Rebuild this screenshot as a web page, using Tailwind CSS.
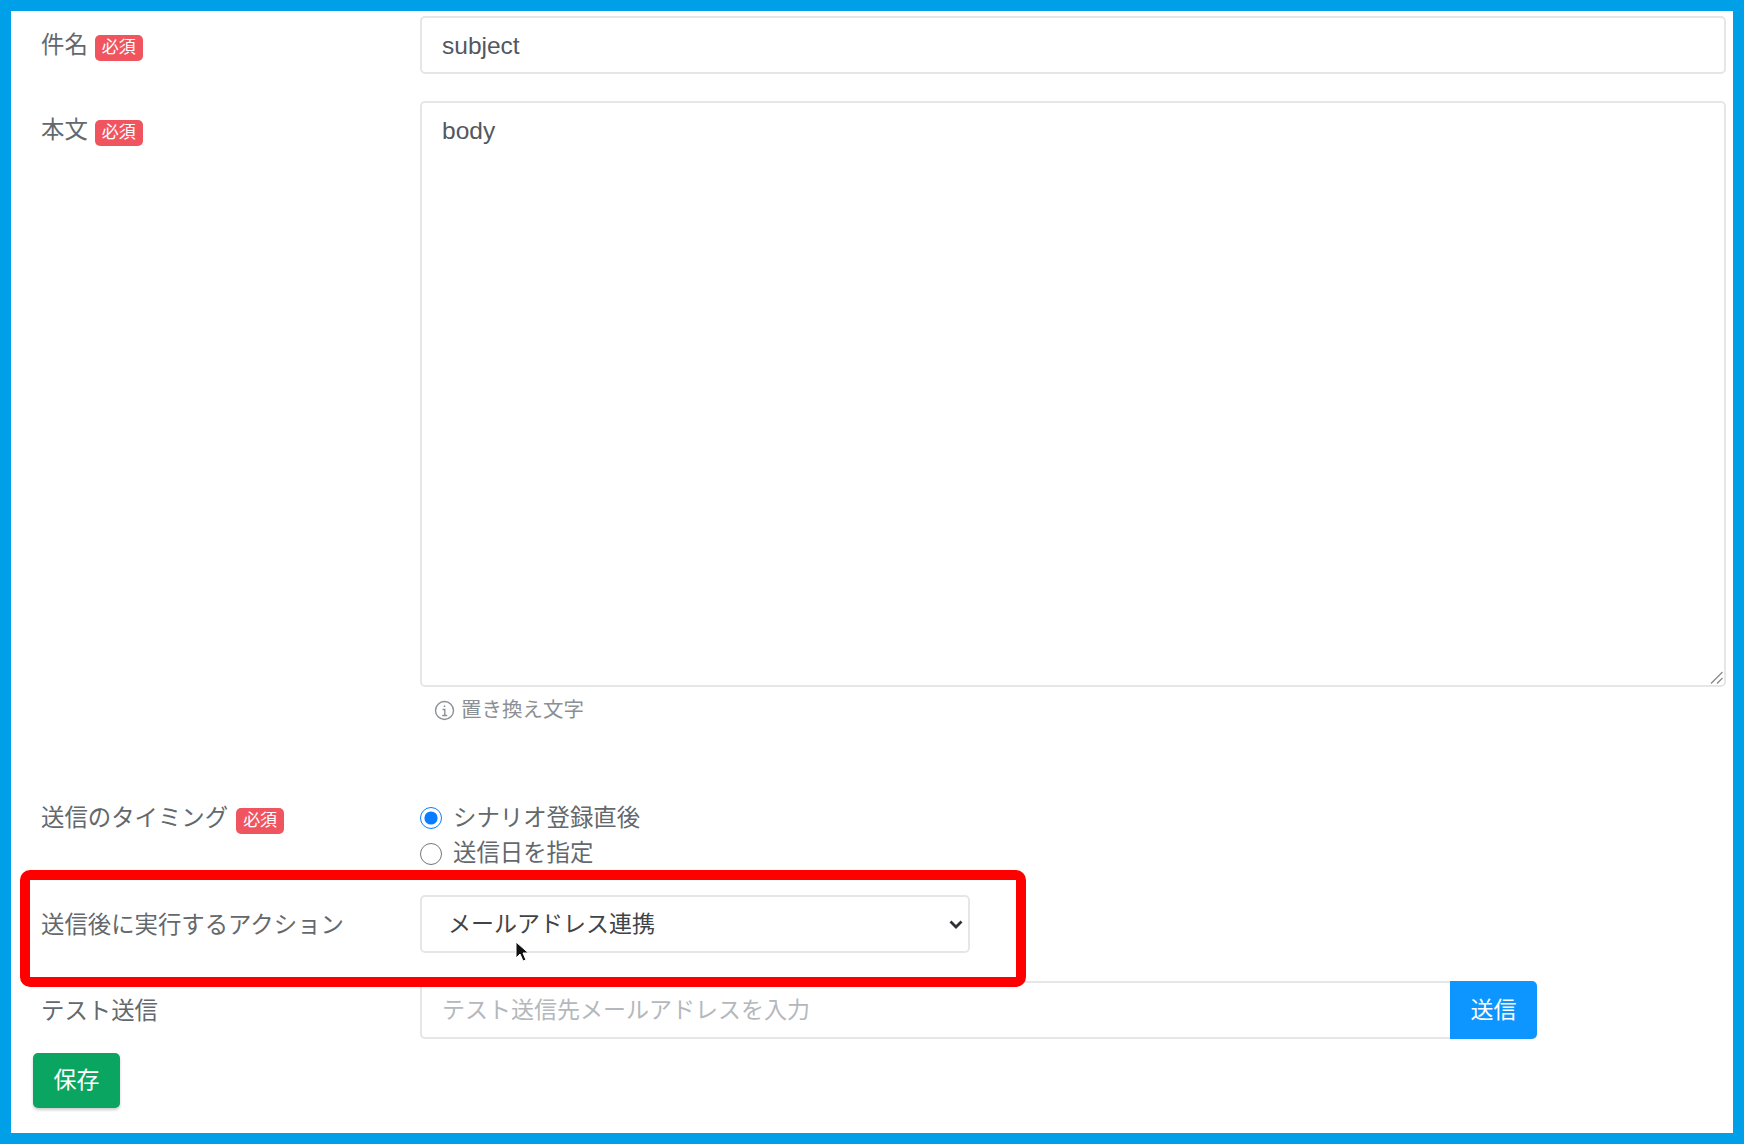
<!DOCTYPE html>
<html lang="ja">
<head>
    <meta charset="UTF-8">
    <meta name="viewport" content="width=device-width, initial-scale=1.0">
    <title>シナリオメール編集</title>
    <script src="https://cdn.jsdelivr.net/npm/@tailwindcss/browser@4"></script>
</head>
<body class="h-[1144px] overflow-hidden bg-white font-['Liberation_Sans','Noto_Sans_CJK_JP',sans-serif] text-[23.400px] text-[#63686d]">
    <div class="relative h-[1144px] border-y-[11px] border-l-[11px] border-r-[11px] border-[#00a0e9] bg-white pl-[30px] pr-[7px] pt-[5px]">
        <form>
            <!-- 件名 -->
            <div class="flex">
                <div class="flex h-[58px] w-[379px] shrink-0 items-center gap-[7px] pt-[2px]">
                    <span>件名</span>
                    <span class="mt-[4px] rounded-[5px] bg-[#f0555f] px-[7px] py-[3px] text-[17px] leading-[20px] text-white">必須</span>
                </div>
                <input type="text" value="subject" class="h-[58px] w-full rounded-[5px] border-2 border-[#e4e6e8] px-[20px] pt-[2px] text-[24.500px] text-[#53585d] outline-none">
            </div>
            <!-- 本文 -->
            <div class="mt-[27px] flex">
                <div class="flex h-[58px] w-[379px] shrink-0 items-center gap-[7px] pt-[2px]">
                    <span>本文</span>
                    <span class="mt-[4px] rounded-[5px] bg-[#f0555f] px-[7px] py-[3px] text-[17px] leading-[20px] text-white">必須</span>
                </div>
                <div class="w-full">
                    <div class="relative">
                        <textarea class="block h-[586px] w-full resize-none rounded-[5px] border-2 border-[#e4e6e8] px-[20px] py-[10px] text-[24.500px] text-[#53585d] outline-none">body</textarea>
                        <svg class="pointer-events-none absolute bottom-[2px] right-[2px] size-[14px]" viewBox="0 0 14 14" fill="none" stroke="#8a8a8a" stroke-width="1.300">
                            <path d="M1 12.500 12.500 1M7 12.500 12.500 7"/>
                        </svg>
                    </div>
                    <div class="mt-[8px] flex h-[30px] items-center gap-[6px] pl-[14px] text-[20.500px] text-[#8b9095]">
                        <svg class="size-[21px]" viewBox="0 0 21 21" fill="none" stroke="#8b9095" stroke-width="1.400">
                            <circle cx="10.500" cy="10.500" r="9"/>
                            <path d="M8.500 9.500h2.300v6M8.200 15.500h5"/>
                            <circle cx="10.500" cy="6.200" r="0.900" fill="#8b9095" stroke="none"/>
                        </svg>
                        <span>置き換え文字</span>
                    </div>
                </div>
            </div>
            <!-- 送信のタイミング -->
            <div class="mt-[75px] flex">
                <div class="flex h-[35px] w-[379px] shrink-0 items-center gap-2 pt-[2px]">
                    <span>送信のタイミング</span>
                    <span class="mt-[4px] rounded-[5px] bg-[#f0555f] px-[7px] py-[3px] text-[17px] leading-[20px] text-white">必須</span>
                </div>
                <div class="flex flex-col gap-px">
                    <label class="flex h-[35px] items-center gap-[11px]">
                        <input type="radio" name="timing" checked class="size-[22px] accent-[#0a7cff]">
                        <span class="pt-[2px]">シナリオ登録直後</span>
                    </label>
                    <label class="flex h-[35px] items-center gap-[11px]">
                        <input type="radio" name="timing" class="size-[22px]">
                        <span>送信日を指定</span>
                    </label>
                </div>
            </div>
            <!-- 送信後に実行するアクション -->
            <div class="mt-[24px] flex items-center">
                <div class="w-[379px] shrink-0 pt-[3px]">送信後に実行するアクション</div>
                <div class="relative w-[550px]">
                    <select class="block h-[58px] w-full appearance-none rounded-[5px] border-2 border-[#e4e6e8] bg-white px-[26px] text-[23px] text-[#3f4448] outline-none">
                        <option>メールアドレス連携</option>
                    </select>
                    <svg class="pointer-events-none absolute right-[6px] top-[21px] size-[16px]" viewBox="0 0 16 16" fill="none" stroke="#2f3337" stroke-width="2.800">
                        <path d="M2.500 5.500 8 11l5.500-5.500"/>
                    </svg>
                </div>
            </div>
            <!-- テスト送信 -->
            <div class="mt-[28px] flex items-center">
                <div class="w-[379px] shrink-0 pt-[3px]">テスト送信</div>
                <div class="flex w-[1117px]">
                    <input type="text" placeholder="テスト送信先メールアドレスを入力" class="h-[58px] min-w-0 flex-1 rounded-l-[5px] border-2 border-r-0 border-[#e4e6e8] px-[20px] text-[23px] outline-none placeholder:text-[#b4b8bc]">
                    <button type="button" class="h-[58px] w-[87px] rounded-r-[5px] bg-[#0d96ff] text-[23px] text-white">送信</button>
                </div>
            </div>
            <button type="button" class="-ml-[8px] mt-[14px] h-[55px] w-[87px] rounded-[5px] bg-[#0aa661] text-[23px] text-white shadow-[0_2px_3px_rgba(0,0,0,0.2)]">保存</button>
        </form>

        <!-- 注釈の赤枠 -->
        <div class="pointer-events-none absolute left-[9px] top-[859px] h-[117px] w-[1006px] rounded-[10px] border-[10px] border-[#ff0000]"></div>
        <!-- カーソル -->
        <svg class="pointer-events-none absolute left-[504px] top-[930px] h-[22px] w-[16px]" viewBox="0 0 16 22">
            <path d="M1 1v16l4-4 3 7 3-1-3-7h5.500z" fill="#111" stroke="#fff" stroke-width="1"/>
        </svg>
    </div>
</body>
</html>
